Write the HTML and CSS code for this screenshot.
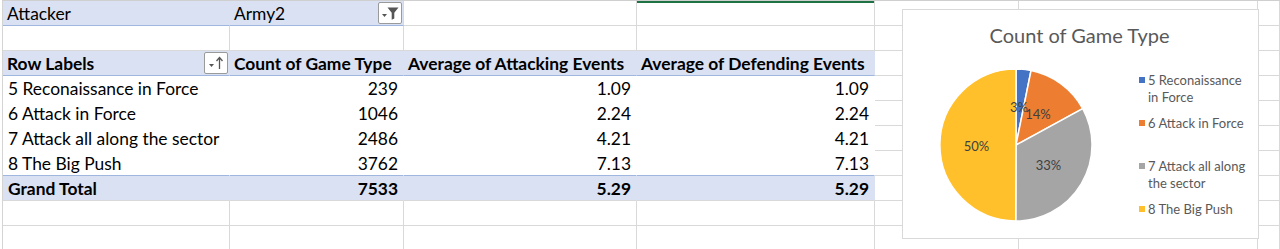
FILE: index.html
```html
<!DOCTYPE html>
<html lang="en">
<head>
  <meta charset="UTF-8">
  <title>Game Type Pivot</title>
  <link rel="stylesheet" href="styles.css">
</head>
<body>
  <div class="sheet">
    <div class="row">
      <div class="cell pf">Attacker</div>
      <div class="cell pf">Army2
        <span class="btn filter">
          <svg width="20" height="18" viewBox="0 0 20 18"><path d="M2 10h5l-2.5 3z" fill="#555"/><path d="M7.5 3.5h11l-4.2 5.2v5.8l-2.6 1.3v-7.1z" fill="#555"/></svg>
        </span>
      </div>
      <div class="cell sel"></div>
      <div class="cell sel top"></div>
      <div class="cell"></div>
      <div class="cell"></div>
      <div class="cell"></div>
    </div>
    <div class="row">
      <div class="cell"></div><div class="cell"></div><div class="cell"></div><div class="cell"></div>
      <div class="cell"></div><div class="cell"></div><div class="cell"></div>
    </div>
    <div class="row">
      <div class="cell pv head">Row Labels
        <span class="btn sort">
          <svg width="20" height="18" viewBox="0 0 20 18"><path d="M3 10h5l-2.5 3z" fill="#555"/><path d="M13.5 15V4M10.5 7l3-3.5 3 3.5" stroke="#555" stroke-width="1.3" fill="none"/></svg>
        </span>
      </div>
      <div class="cell pv head">Count of Game Type</div>
      <div class="cell pv head">Average of Attacking Events</div>
      <div class="cell pv head">Average of Defending Events</div>
      <div class="cell"></div><div class="cell"></div><div class="cell"></div>
    </div>
    <div class="row">
      <div class="cell pv">5 Reconaissance in Force</div>
      <div class="cell pv num">239</div>
      <div class="cell pv num">1.09</div>
      <div class="cell pv num">1.09</div>
      <div class="cell"></div><div class="cell"></div><div class="cell"></div>
    </div>
    <div class="row">
      <div class="cell pv">6 Attack in Force</div>
      <div class="cell pv num">1046</div>
      <div class="cell pv num">2.24</div>
      <div class="cell pv num">2.24</div>
      <div class="cell"></div><div class="cell"></div><div class="cell"></div>
    </div>
    <div class="row">
      <div class="cell pv">7 Attack all along the sector</div>
      <div class="cell pv num">2486</div>
      <div class="cell pv num">4.21</div>
      <div class="cell pv num">4.21</div>
      <div class="cell"></div><div class="cell"></div><div class="cell"></div>
    </div>
    <div class="row">
      <div class="cell pv last">8 The Big Push</div>
      <div class="cell pv last num">3762</div>
      <div class="cell pv last num">7.13</div>
      <div class="cell pv last num">7.13</div>
      <div class="cell"></div><div class="cell"></div><div class="cell"></div>
    </div>
    <div class="row">
      <div class="cell pv total">Grand Total</div>
      <div class="cell pv total num">7533</div>
      <div class="cell pv total num">5.29</div>
      <div class="cell pv total num">5.29</div>
      <div class="cell"></div><div class="cell"></div><div class="cell"></div>
    </div>
    <div class="row">
      <div class="cell"></div><div class="cell"></div><div class="cell"></div><div class="cell"></div>
      <div class="cell"></div><div class="cell"></div><div class="cell"></div>
    </div>
    <div class="row">
      <div class="cell"></div><div class="cell"></div><div class="cell"></div><div class="cell"></div>
      <div class="cell"></div><div class="cell"></div><div class="cell"></div>
    </div>

    <div class="chart">
      <div class="chart-title">Count of Game Type</div>
      <div class="chart-body">
        <svg class="pie" width="156" height="156" viewBox="0 0 156 156">
          <g stroke="#fff" stroke-width="1.5">
            <path d="M78 78L78 2A76 76 0 0 1 93.05 3.5Z" fill="#4472c4"/>
            <path d="M78 78L93.05 3.5A76 76 0 0 1 144.74 41.63Z" fill="#ed7d31"/>
            <path d="M78 78L144.74 41.63A76 76 0 0 1 77.72 154Z" fill="#a5a5a5"/>
            <path d="M78 78L77.72 154A76 76 0 0 1 78 2Z" fill="#ffc02b"/>
          </g>
          <g class="pie-label">
            <text x="81" y="40">3%</text>
            <text x="100" y="47">14%</text>
            <text x="110.5" y="98">33%</text>
            <text x="38.5" y="79">50%</text>
          </g>
        </svg>
        <ul class="legend">
          <li><span class="mark blue"></span>5 Reconaissance<br>in Force</li>
          <li><span class="mark orange"></span>6 Attack in Force</li>
          <li><span class="mark gray"></span>7 Attack all along<br>the sector</li>
          <li><span class="mark yellow"></span>8 The Big Push</li>
        </ul>
      </div>
    </div>
  </div>
</body>
</html>
```

FILE: styles.css
```css
body {
  margin: 0;
  background-color: white;
  font-family: Lato, "Open Sans", sans-serif;
  color: #000;
  overflow: hidden;
}
.sheet {
  position: relative;
  margin-left: 2px;
  border-left: 1px solid #d4d4d4;
  border-top: 1px solid #cfcfcf;
}
.row {
  display: grid;
  grid-template-columns: 227px 174px 233px 238px 144px 239px 1fr;
}
.cell {
  position: relative;
  height: 24px;
  line-height: 26px;
  font-size: 17.4px;
  padding: 0 5px;
  white-space: nowrap;
  border-right: 1px solid #d9d9d9;
  border-bottom: 1px solid #d9d9d9;
  overflow: visible;
}
.top {
  box-shadow: inset 0 2px 0 #1f7244;
}
.pf {
  background-color: #d9e1f2;
  border-right-color: transparent;
  border-bottom-color: #9fb6df;
  padding-left: 4px;
}
.pf + .pf {
  border-right-color: #d9d9d9;
}
.pv {
  border-right-color: transparent;
  border-bottom-color: transparent;
}
.pv.head, .pv.total {
  background-color: #d9e1f2;
  font-weight: bold;
}
.pv.head {
  border-bottom-color: #9fb6df;
  padding-left: 4px;
}
.pv.last {
  border-bottom-color: #9fb6df;
}
.pv.total {
  border-bottom-color: #d9d9d9;
}
.num {
  text-align: right;
}
.btn {
  position: absolute;
  right: 1px;
  top: 1px;
  width: 22px;
  height: 20px;
  background: white;
  border: 1px solid #9a9a9a;
  border-radius: 2px;
  display: flex;
  align-items: center;
  justify-content: center;
}
.chart {
  position: absolute;
  left: 899px;
  top: 8px;
  width: 355px;
  height: 228px;
  background: white;
  border: 1px solid #d9d9d9;
  color: #595959;
}
.chart-title {
  margin-top: 13px;
  text-align: center;
  font-size: 20px;
  line-height: 25px;
  padding-right: 2px;
}
.chart-body {
  display: flex;
  margin-top: 19px;
  padding-left: 35px;
}
.pie-label text {
  font-family: Lato, sans-serif;
  font-size: 13px;
  fill: #404040;
  text-anchor: middle;
  dominant-baseline: central;
}
.legend {
  list-style: none;
  margin: 5px 0 0 45px;
  padding: 0;
  font-size: 13px;
  line-height: 17px;
  white-space: nowrap;
}
.legend li {
  position: relative;
  height: 43px;
  padding-left: 9px;
}
.mark {
  position: absolute;
  left: 0;
  top: 5px;
  width: 6px;
  height: 6px;
}
.blue { background: #4472c4; }
.orange { background: #ed7d31; }
.gray { background: #a5a5a5; }
.yellow { background: #ffc02b; }
```
